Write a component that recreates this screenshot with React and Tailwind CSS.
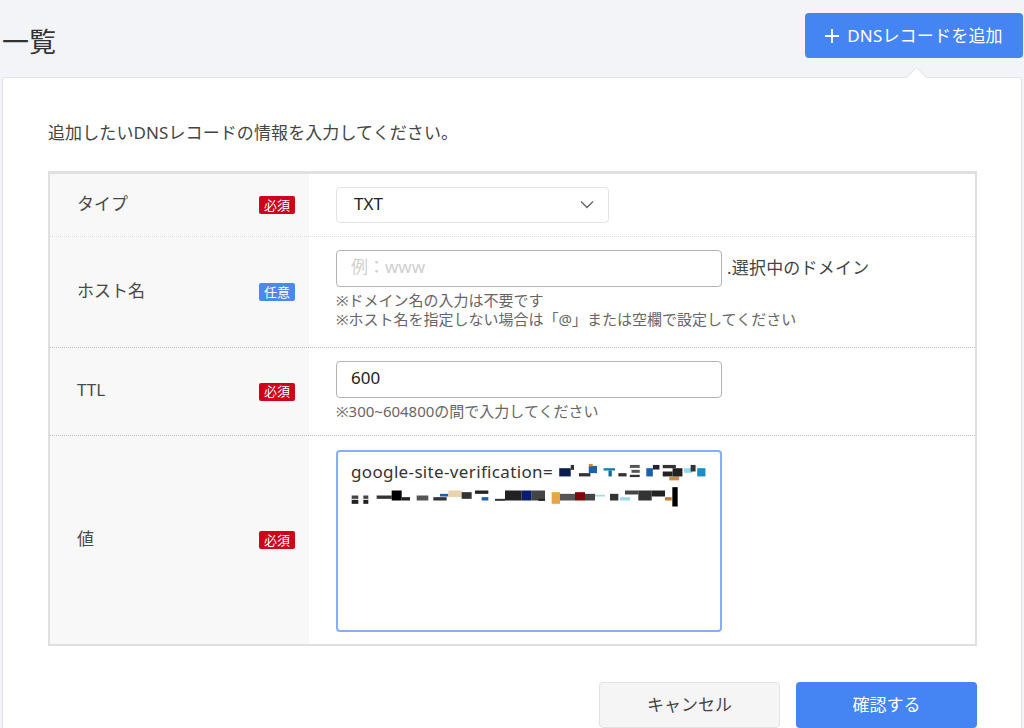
const F = '[font-family:"Noto_Sans","Noto_Sans_CJK_JP",sans-serif]';

function Badge({ optional }) {
  return (
    <span className={`flex h-[18px] w-[36px] items-center justify-center rounded-[2px] text-[13px] leading-none text-white ${optional ? "bg-[#4a88f2]" : "bg-[#d0021b]"}`}>
      {optional ? "任意" : "必須"}
    </span>
  );
}

function Row({ label, optional, height, last, faint, children }) {
  return (
    <div className={`flex ${height} ${last ? "" : faint ? "border-b border-dotted border-[#dcdcdc]" : "border-b border-dotted border-[#bdbdbd]"}`}>
      <div className="flex w-[259px] shrink-0 items-center justify-between bg-[#f8f8f8] pl-[27px] pr-[14px]">
        <span className="pb-[4px] text-[17px] leading-none text-[#4a4a4a]">{label}</span>
        <Badge optional={optional} />
      </div>
      <div className="min-w-0 flex-1 pl-[27px]">{children}</div>
    </div>
  );
}

const noise1 = [
  [715,85,35,25,"#0b1b4d"],[750,75,10,15,"#333"],[775,100,35,10,"#333"],[805,78,25,22,"#1a5fb0"],[805,72,12,8,"#c98a2d"],[850,85,35,7,"#0d7db0"],[865,92,10,18,"#0d6d9a"],[895,100,25,10,"#333"],[930,75,30,9,"#555"],[935,90,25,9,"#555"],[930,105,30,7,"#333"],[980,85,20,25,"#1a5fb0"],[1000,75,20,14,"#223"],[1030,75,40,10,"#333"],[1030,95,30,15,"#222"],[1050,110,30,12,"#c98a4a"],[1060,85,30,25,"#222"],[1095,85,25,14,"#8edaf0"],[1115,75,15,20,"#333"],[1135,85,25,25,"#1a8cc7"]
];
const noise2 = [
  [100,165,20,10,"#444"],[100,178,20,12,"#222"],[135,165,15,10,"#444"],[135,178,15,12,"#222"],[175,165,45,10,"#333"],[220,150,30,30,"#000"],[250,170,25,10,"#222"],[295,165,35,15,"#555"],[345,170,40,10,"#333"],[365,160,25,8,"#1a5fb0"],[390,150,40,20,"#e9d4b0"],[430,155,30,20,"#333"],[470,150,40,10,"#222"],[490,170,20,10,"#1a5fb0"],[530,175,30,6,"#333"],[560,150,50,30,"#222"],[610,150,30,30,"#0c1a70"],[640,150,40,30,"#444"],[660,175,20,6,"#222"],[700,155,25,35,"#e8a548"],[725,160,45,20,"#555"],[770,155,30,25,"#7a0a0a"],[800,160,30,20,"#444"],[830,163,30,5,"#9fd8f0"],[875,160,25,20,"#333"],[920,150,40,12,"#444"],[905,170,30,10,"#9fd8f0"],[960,150,40,30,"#333"],[1000,150,40,18,"#222"],[1040,170,20,10,"#c47a2b"]
];

export default function App() {
  return (
    <div className={`relative h-[728px] w-[1024px] overflow-hidden bg-[#f3f4f8] pt-[2px] ${F}`}>
      <header className="flex h-[75px] items-start justify-between pl-[2px] pr-[1px]">
        <h1 className="mt-[24px] text-[27px] font-normal leading-[32px] text-[#333]">一覧</h1>
        <button className="mt-[11px] flex h-[45px] w-[218px] items-center justify-center gap-[8px] rounded-[4px] bg-[#4485f3] text-[17px] tracking-[0.2px] text-white">
          <svg width="14" height="14" viewBox="0 0 14 14" fill="none" stroke="white" strokeWidth="1.8"><path d="M7 0v14M0 7h14" /></svg>
          <span>DNSレコードを追加</span>
        </button>
      </header>

      <main className="relative mx-[2px] h-[660px] rounded-t-[3px] border border-[#e4e4e4] bg-white pl-[45px] pr-[44px] pt-[44px] shadow-[0_0_2px_rgba(0,0,0,0.05)]">
        <span className="absolute right-[97px] top-[-8px] h-[15px] w-[15px] rotate-45 border-l border-t border-[#e4e4e4] bg-white" />
        <p className="text-[17px] leading-[22px] tracking-[0.1px] text-[#444]">追加したいDNSレコードの情報を入力してください。</p>

        <div className="mt-[27px] h-[475px] border-x-2 border-b-2 border-t-[3px] border-[#e0e0e0]">
          <Row label="タイプ" height="h-[63px]" faint>
            <div className="mt-[13px] flex h-[36px] w-[273px] items-center justify-between rounded-[4px] border border-[#e4e4e4] pb-[2px] pl-[17px] pr-[13px] text-[17px] text-[#222]">
              <span>TXT</span>
              <svg width="16" height="9" viewBox="0 0 16 9" fill="none" stroke="#666" strokeWidth="1.4"><path d="M2 1.5l6 6 6-6" /></svg>
            </div>
          </Row>
          <Row label="ホスト名" optional height="h-[111px]">
            <div className="mt-[13px] flex items-center">
              <div className="flex h-[37px] w-[386px] items-center rounded-[4px] border border-[#b4b4b4] pb-[3px] pl-[14px] text-[17px] text-[#cfcfcf]">例：www</div>
              <span className="ml-[5px] pb-[3px] text-[17px] leading-none tracking-[0.2px] text-[#444]">.選択中のドメイン</span>
            </div>
            <p className="mt-[4px] text-[15px] leading-[19px] text-[#666]">※ドメイン名の入力は不要です<br />※ホスト名を指定しない場合は「@」または空欄で設定してください</p>
          </Row>
          <Row label="TTL" height="h-[88px]">
            <div className="mt-[13px] flex h-[37px] w-[386px] items-center rounded-[4px] border border-[#b4b4b4] pb-[3px] pl-[14px] text-[17px] text-[#222]">600</div>
            <p className="mt-[4px] text-[15px] leading-[19px] text-[#666]">※300~604800の間で入力してください</p>
          </Row>
          <Row label="値" height="h-[208px]" last>
            <div className="mt-[14px] h-[182px] w-[386px] rounded-[4px] border-2 border-[#86aff8] pl-[13px] pt-[8px]">
              <div className="flex h-[23px] items-center text-[17px] leading-none tracking-[0.35px] text-[#333]">
                <span>google-site-verification=</span>
                <svg className="shrink-0" width="157" height="23" viewBox="700 60 470 70">
                  {noise1.map(([x, y, w, h, c], i) => <rect key={i} x={x} y={y} width={w} height={h} fill={c} />)}
                </svg>
              </div>
              <svg className="ml-[-1px] mt-[4px] block" width="330" height="22" viewBox="95 140 990 65">
                {noise2.map(([x, y, w, h, c], i) => <rect key={i} x={x} y={y} width={w} height={h} fill={c} />)}
                <rect x="1062" y="140" width="16" height="58" fill="#000" />
              </svg>
            </div>
          </Row>
        </div>

        <div className="mt-[36px] flex justify-end gap-[16px]">
          <button className="h-[46px] w-[181px] rounded-[4px] border border-[#e2e2e2] bg-[#f5f5f5] text-[17px] text-[#444]">キャンセル</button>
          <button className="h-[46px] w-[181px] rounded-[4px] bg-[#4485f3] text-[17px] text-white">確認する</button>
        </div>
      </main>
    </div>
  );
}
